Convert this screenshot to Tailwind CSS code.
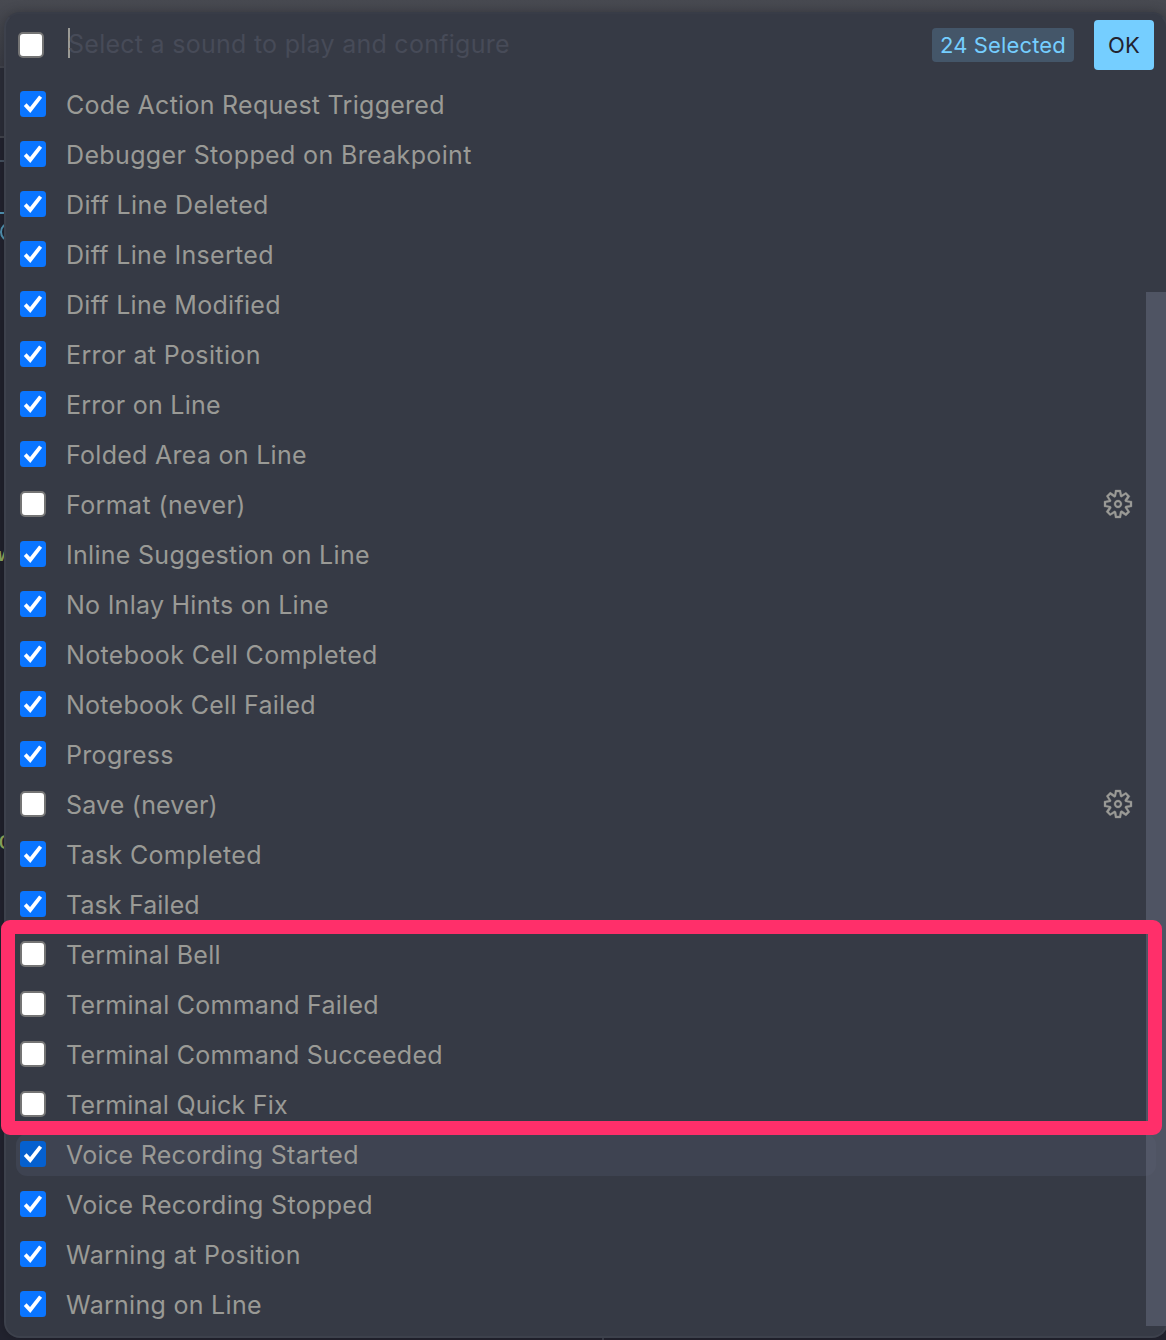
<!DOCTYPE html>
<html lang="en">
<head>
<meta charset="utf-8">
<title>Select a sound</title>
<script src="https://cdn.jsdelivr.net/npm/@tailwindcss/browser@4"></script>
</head>
<body class="h-[1340px] w-[1166px] overflow-hidden bg-[#22232f] font-['Inter',sans-serif]">
<div class="relative h-[1340px] w-[1166px] overflow-hidden">
  <!-- editor behind the picker -->
  <div class="absolute inset-x-0 top-0 h-[67px] bg-linear-to-b from-[#484a51] to-[#3a3c45]"></div>
  <div class="absolute left-0 top-[66px] h-[2px] w-5 bg-[#42444d]"></div>
  <div class="absolute left-0 top-[68px] h-[68px] w-5 bg-[#2b2d38]"></div>
  <div class="absolute left-0 top-[136px] h-[2px] w-5 bg-[#42444d]"></div>
  <div class="absolute left-0 top-[160px] h-[2px] w-5 bg-[#465261]"></div>
  <div class="absolute left-0 top-[212px] h-[2px] w-5 bg-[#5295b5]"></div>
  <div class="absolute left-0 top-[320px] h-[580px] w-5 bg-[#20212c]"></div>
  <div class="absolute left-0 top-[222px] h-5 w-5 rounded-full border-2 border-[#5295b5]"></div>
  <div class="absolute left-[-9px] top-[541px] font-['Liberation_Mono',monospace] text-[26px] italic leading-[26px] text-[#8faa5c]">w</div>
  <div class="absolute left-[-2px] top-[829px] font-['Liberation_Mono',monospace] text-[26px] leading-[26px] text-[#8faa5c]">c</div>

  <!-- picker -->
  <div class="relative ml-1 mt-3 h-[1326px] w-[1164px] rounded-[16px] border-2 border-[#3d414c] border-t-[#383c47] bg-[#363a45] shadow-[0_0_12px_rgba(0,0,0,0.22)]">
    <div class="mb-[3px] flex h-[62px] items-center pl-3 pr-3">
      <span class="h-[26px] w-[26px] shrink-0 rounded-[5px] border-2 border-[#747474] bg-white"></span>
      <span class="ml-6 h-[30px] w-[2px] -translate-y-[2px] bg-[#9a9a96]"></span>
      <span class="-ml-[2px] flex-1 -translate-y-px whitespace-nowrap text-[25px] leading-[38px] text-[#474b58]"><span data-w="441" data-size="25">Select a sound to play and configure</span></span>
      <span class="mr-5 flex h-[34px] w-[142px] items-center rounded-[4px] bg-[#445669] pl-2 text-[22px] text-[#75ceff]"><span class="whitespace-nowrap" data-w="125" data-size="22">24 Selected</span></span>
      <span class="flex h-[50px] w-[60px] items-center rounded-[4px] bg-[#75ceff] pl-[14px] text-[22px] text-[#22232f]"><span data-w="31" data-size="22">OK</span></span>
    </div>
    <div id="list"></div>
  </div>
  <div class="absolute left-[1146px] top-[292px] h-[1034px] w-5 bg-[#5d6273]/65"></div>
  <div class="absolute left-px top-[920px] h-[215px] w-[1161px] rounded-[9px] border-[14px] border-[#ff2f6a]"></div>
  <div class="absolute bottom-0 left-[602px] h-[2px] w-[2px] bg-[#363944]"></div>
</div>
<script>
const rows = [
  ['Code Action Request Triggered', 378, 1], ['Debugger Stopped on Breakpoint', 405, 1],
  ['Diff Line Deleted', 202, 1], ['Diff Line Inserted', 207, 1], ['Diff Line Modified', 214, 1],
  ['Error at Position', 194, 1], ['Error on Line', 154, 1], ['Folded Area on Line', 240, 1],
  ['Format (never)', 179, 0, 'gear'], ['Inline Suggestion on Line', 303, 1],
  ['No Inlay Hints on Line', 262, 1], ['Notebook Cell Completed', 311, 1],
  ['Notebook Cell Failed', 249, 1], ['Progress', 107, 1], ['Save (never)', 151, 0, 'gear'],
  ['Task Completed', 195, 1], ['Task Failed', 133, 1], ['Terminal Bell', 154, 0],
  ['Terminal Command Failed', 312, 0], ['Terminal Command Succeeded', 376, 0],
  ['Terminal Quick Fix', 221, 0], ['Voice Recording Started', 292, 1, 'focus'],
  ['Voice Recording Stopped', 306, 1], ['Warning at Position', 234, 1], ['Warning on Line', 195, 1]
];
const gear = `<svg class="ml-auto mr-8 h-8 w-8" viewBox="0 0 16 16" fill="#9a9a96" stroke="#9a9a96" stroke-width="0.15"><path fill-rule="evenodd" clip-rule="evenodd" d="M9.1 4.4L8.6 2H7.4l-.5 2.4-.7.3-2-1.3-.9.8 1.3 2-.2.7-2.4.5v1.2l2.4.5.3.8-1.3 2 .8.8 2-1.3.8.3.4 2.3h1.2l.5-2.4.8-.3 2 1.3.8-.8-1.3-2 .3-.8 2.3-.4V7.4l-2.4-.5-.3-.8 1.3-2-.8-.8-2 1.3-.7-.2zM9.4 1l.5 2.4L12 2.1l2 2-1.4 2.1 2.4.4v2.8l-2.4.5L14 12l-2 2-2.1-1.4-.5 2.4H6.6l-.5-2.4L4 13.9l-2-2 1.4-2.1L1 9.4V6.6l2.4-.5L2.1 4l2-2 2.1 1.4.4-2.4h2.8zm.6 7c0 1.1-.9 2-2 2s-2-.9-2-2 .9-2 2-2 2 .9 2 2zM8 9c.6 0 1-.4 1-1s-.4-1-1-1-1 .4-1 1 .4 1 1 1z"/></svg>`;
document.getElementById('list').innerHTML = rows.map(([name, w, on, extra]) => `
  <div class="relative flex h-[50px] items-center">
    ${extra === 'focus' ? '<span class="absolute left-[10px] top-[5px] h-[42px] w-[1140px] rounded-[11px] bg-[#3e4351]"></span>' : ''}
    ${on ? `<svg class="relative ml-[14px] h-[26px] w-[26px] shrink-0" viewBox="0 0 26 26"><rect width="26" height="26" rx="3.5" fill="${extra === 'focus' ? '#0560cf' : '#0a75ff'}"/><path d="M5.2 13.6l5 5.4L20.6 5.6" fill="none" stroke="#fff" stroke-width="3.8"/></svg>`
         : '<span class="ml-[14px] h-[26px] w-[26px] shrink-0 rounded-[5px] border-2 border-[#747474] bg-white"></span>'}
    <span class="relative ml-5 translate-y-[2px] whitespace-nowrap text-[25px] text-[#9a9a96]" data-w="${w}" data-size="25">${name}</span>
    ${extra === 'gear' ? gear : ''}
  </div>`).join('');
const ctx = document.createElement('canvas').getContext('2d');
document.querySelectorAll('[data-w]').forEach(el => {
  ctx.font = `${el.dataset.size}px Inter`;
  const natural = ctx.measureText(el.textContent).width;
  el.style.letterSpacing = ((+el.dataset.w + 0.8 - natural) / el.textContent.length) + 'px';
});
</script>
</body>
</html>
